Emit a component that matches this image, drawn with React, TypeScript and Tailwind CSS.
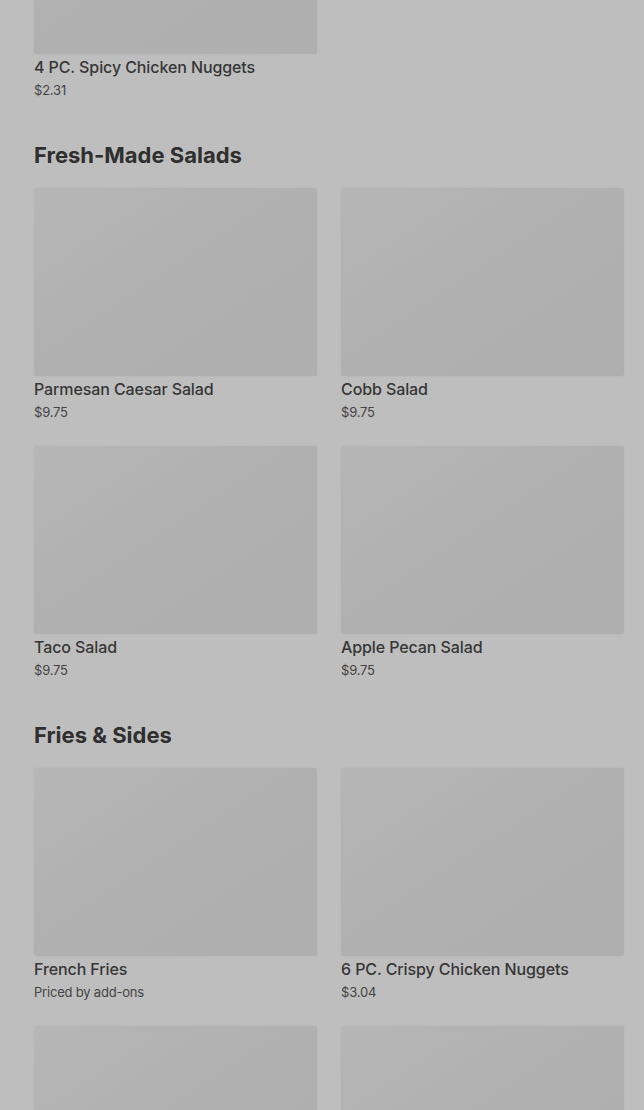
import React from "react";

type Item = { name?: string; price?: string };

const font = { fontFamily: "Inter, 'Liberation Sans', sans-serif" };

function Card({ item, first }: { item: Item; first?: boolean }) {
  return (
    <div className={first ? "-mt-[134px]" : ""}>
      <div className="h-[188px] w-full rounded-[2px] bg-gradient-to-br from-[#b6b6b6] via-[#b0b0b0] to-[#afafaf] shadow-[0_0_3px_rgba(0,0,0,0.04)]" />
      {item.name && (
        <>
          <div className="mt-[1px] text-[16px] leading-[24px] font-medium text-[#363636] tracking-[-0.1px]">
            {item.name}
          </div>
          <div className="mt-[1px] text-[13px] leading-[20px] text-[#444444] tracking-[-0.2px]">{item.price}</div>
        </>
      )}
    </div>
  );
}

function Section({ title, items }: { title: string; items: Item[] }) {
  return (
    <section className="mt-[41px]">
      <h2 className="text-[22px] leading-[28px] font-bold text-[#2f2f2f] tracking-[0px] mb-[19px]">
        {title}
      </h2>
      <div className="grid grid-cols-2 gap-x-[24px] gap-y-[24px]">
        {items.map((it, i) => (
          <Card key={i} item={it} />
        ))}
      </div>
    </section>
  );
}

export default function App() {
  return (
    <div className="h-[1110px] overflow-hidden bg-[#bebebe] pl-[34px] pr-[20px]" style={font}>
      <div className="grid grid-cols-2 gap-x-[24px]">
        <Card first item={{ name: "4 PC. Spicy Chicken Nuggets", price: "$2.31" }} />
        <div />
      </div>
      <Section
        title="Fresh-Made Salads"
        items={[
          { name: "Parmesan Caesar Salad", price: "$9.75" },
          { name: "Cobb Salad", price: "$9.75" },
          { name: "Taco Salad", price: "$9.75" },
          { name: "Apple Pecan Salad", price: "$9.75" },
        ]}
      />
      <Section
        title="Fries & Sides"
        items={[
          { name: "French Fries", price: "Priced by add-ons" },
          { name: "6 PC. Crispy Chicken Nuggets", price: "$3.04" },
          {},
          {},
        ]}
      />
    </div>
  );
}
